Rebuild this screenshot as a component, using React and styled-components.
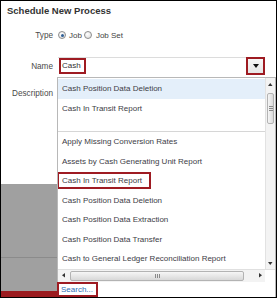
import React from "react";
import styled, { createGlobalStyle } from "styled-components";

const GlobalStyle = createGlobalStyle`
  html, body { margin: 0; padding: 0; background: #fff; }
  body { font-family: "Liberation Sans", Arial, sans-serif; }
`;

const Frame = styled.div`
  position: relative;
  width: 277px;
  height: 298px;
  box-sizing: border-box;
  border: 1px solid #000;
  display: flex;
  flex-direction: column;
  overflow: hidden;
  background: #fff;
`;

const Title = styled.h2`
  margin: 0;
  height: 20px;
  line-height: 20px;
  padding-left: 6px;
  font-size: 9.5px;
  font-weight: bold;
  color: #333;
`;

const Row = styled.div`
  display: grid;
  grid-template-columns: 52px 1fr;
  column-gap: 5px;
  align-items: center;
  height: ${(p) => p.h}px;
  margin-top: ${(p) => p.top}px;
`;

const Label = styled.label`
  text-align: right;
  font-size: 8.2px;
  color: #4a4a4a;
`;

const RadioGroup = styled.div`
  display: flex;
  align-items: center;
  gap: 2px;
  font-size: 8px;
  color: #444;
`;

const RadioOption = styled.span`
  display: flex;
  align-items: center;
  gap: 3px;
  margin-right: ${(p) => p.mr || 0}px;
`;

const Radio = styled.span`
  width: 8px;
  height: 8px;
  box-sizing: border-box;
  border-radius: 50%;
  border: 1px solid #8d8d8d;
  background: radial-gradient(circle at 40% 35%, #fff 0%, #e2e2e2 80%);
  display: flex;
  align-items: center;
  justify-content: center;
  &::after {
    content: "";
    width: 3px;
    height: 3px;
    border-radius: 50%;
    background: ${(p) => (p.checked ? "#2f5f96" : "transparent")};
  }
`;

const Combo = styled.div`
  width: 207px;
  height: 19px;
  box-sizing: border-box;
  border-top: 1px solid #dcdcdc;
  display: flex;
  align-items: flex-start;
  justify-content: space-between;
  align-self: start;
`;

const CashBox = styled.span`
  margin: 0 0 0 1px;
  border: 2px solid #9e1b22;
  padding: 0 3px 0 1px;
  height: 12px;
  line-height: 12px;
  font-size: 8px;
  color: #333;
`;

const DropButton = styled.span`
  width: 19px;
  height: 18px;
  margin-top: -1px;
  box-sizing: border-box;
  border: 2px solid #9e1b22;
  background: linear-gradient(#f7f7f7, #e6e6e6);
  display: flex;
  align-items: center;
  justify-content: center;
`;

const Fill = styled.div`
  flex: 1;
`;

const Backdrop = styled.div`
  height: 107px;
  background: #a0a0a0;
  padding-top: 73px;
  box-sizing: border-box;
`;

const BackdropLine = styled.div`
  height: 1px;
  background: #8b8b8b;
`;

const RedBar = styled.div`
  height: 6px;
  background: #9b1b1f;
`;

const Popup = styled.div`
  position: absolute;
  left: 56px;
  top: 76px;
  right: 0;
  bottom: 0;
  border: 1px solid #b8b8b8;
  border-bottom: none;
  background: #fff;
  display: flex;
  flex-direction: column;
`;

const ListArea = styled.div`
  flex: 1;
  display: flex;
  min-height: 0;
`;

const List = styled.div`
  flex: 1;
  overflow: hidden;
  padding-top: 1px;
`;

const Item = styled.div`
  height: 19.5px;
  line-height: 19.5px;
  padding-left: 4px;
  font-size: 8px;
  color: #3d3d46;
  white-space: nowrap;
  background: ${(p) => (p.active ? "#e4effa" : "transparent")};
`;

const GroupGap = styled.div`
  height: 13px;
  border-bottom: 1px solid #d6d6d6;
`;

const Marked = styled.span`
  display: inline-block;
  margin-left: -5px;
  padding: 0 7px 0 3px;
  height: 13px;
  line-height: 13px;
  border: 2px solid #9e1b22;
  vertical-align: middle;
`;

const VScroll = styled.div`
  width: 9px;
  display: flex;
  flex-direction: column;
  align-items: center;
  background: #f3f3f3;
  border-left: 1px solid #e2e2e2;
`;

const ArrowCell = styled.div`
  width: ${(p) => p.w || 9}px;
  height: ${(p) => p.h || 11}px;
  display: flex;
  align-items: center;
  justify-content: center;
  flex-shrink: 0;
`;

const VTrack = styled.div`
  flex: 1;
  width: 100%;
  padding-top: 3px;
  box-sizing: border-box;
`;

const VThumb = styled.div`
  height: 31px;
  margin: 0 1px;
  box-sizing: border-box;
  border: 1px solid #b3b3b3;
  border-radius: 2px;
  background: linear-gradient(90deg, #f6f6f6, #dadada);
  display: flex;
  align-items: center;
  justify-content: center;
  &::after {
    content: "";
    width: 4px;
    height: 5px;
    background: repeating-linear-gradient(#8a8a8a 0 1px, transparent 1px 2px);
  }
`;

const HScroll = styled.div`
  height: 12px;
  display: flex;
  align-items: stretch;
  border-top: 1px solid #e0e0e0;
  background: #f3f3f3;
`;

const HTrack = styled.div`
  flex: 1;
  padding: 1px 11px 1px 2px;
  display: flex;
`;

const HThumb = styled.div`
  flex: 1;
  box-sizing: border-box;
  border: 1px solid #b3b3b3;
  border-radius: 2px;
  background: linear-gradient(#f6f6f6, #d8d8d8);
  display: flex;
  align-items: center;
  justify-content: center;
  &::after {
    content: "";
    width: 5px;
    height: 4px;
    background: repeating-linear-gradient(90deg, #8a8a8a 0 1px, transparent 1px 2px);
  }
`;

const Corner = styled.div`
  width: 10px;
  background: #fff;
`;

const SearchRow = styled.div`
  height: 15px;
  display: flex;
  align-items: stretch;
`;

const SearchLink = styled.a`
  margin-left: -1px;
  padding: 0 3px 0 2px;
  border: 2px solid #9e1b22;
  font-size: 8px;
  line-height: 11px;
  color: #2f6db5;
  text-decoration: none;
`;

function Tri({ dir = "down", size = 4, color = "#222" }) {
  const pts = {
    down: "0,0 6,0 3,4",
    up: "0,4 6,4 3,0",
    left: "4,0 4,6 0,3",
    right: "0,0 0,6 4,3",
  }[dir];
  const vertical = dir === "up" || dir === "down";
  return (
    <svg
      width={vertical ? size * 1.5 : size}
      height={vertical ? size : size * 1.5}
      viewBox={vertical ? "0 0 6 4" : "0 0 4 6"}
    >
      <polygon points={pts} fill={color} />
    </svg>
  );
}

const group1 = ["Cash Position Data Deletion", "Cash In Transit Report"];
const group2 = [
  "Apply Missing Conversion Rates",
  "Assets by Cash Generating Unit Report",
  "Cash In Transit Report",
  "Cash Position Data Deletion",
  "Cash Position Data Extraction",
  "Cash Position Data Transfer",
  "Cash to General Ledger Reconciliation Report",
];

export default function App() {
  return (
    <>
      <GlobalStyle />
      <Frame>
        <Title>Schedule New Process</Title>
        <Row h={20} top={4}>
          <Label>Type</Label>
          <RadioGroup>
            <RadioOption>
              <Radio checked />
              Job
            </RadioOption>
            <RadioOption>
              <Radio />
              <span style={{ marginLeft: 1 }}>Job Set</span>
            </RadioOption>
          </RadioGroup>
        </Row>
        <Row h={19} top={12}>
          <Label>Name</Label>
          <Combo>
            <CashBox>Cash</CashBox>
            <DropButton>
              <Tri dir="down" size={4} color="#111" />
            </DropButton>
          </Combo>
        </Row>
        <Row h={20} top={7}>
          <Label>Description</Label>
        </Row>
        <Fill />
        <Backdrop>
          <BackdropLine />
        </Backdrop>
        <RedBar />

        <Popup>
          <ListArea>
            <List>
              {group1.map((t, i) => (
                <Item key={t} active={i === 0}>
                  {t}
                </Item>
              ))}
              <GroupGap />
              {group2.map((t, i) => (
                <Item key={t + i}>{i === 2 ? <Marked>{t}</Marked> : t}</Item>
              ))}
            </List>
            <VScroll>
              <ArrowCell h={12}>
                <Tri dir="up" size={3} color="#333" />
              </ArrowCell>
              <VTrack>
                <VThumb />
              </VTrack>
              <ArrowCell h={12}>
                <Tri dir="down" size={3} color="#333" />
              </ArrowCell>
            </VScroll>
          </ListArea>
          <HScroll>
            <ArrowCell w={10} h={11}>
              <Tri dir="left" size={3} color="#333" />
            </ArrowCell>
            <HTrack>
              <HThumb />
            </HTrack>
            <ArrowCell w={10} h={11}>
              <Tri dir="right" size={3} color="#333" />
            </ArrowCell>
            <Corner />
          </HScroll>
          <SearchRow>
            <SearchLink href="#">Search...</SearchLink>
          </SearchRow>
        </Popup>
      </Frame>
    </>
  );
}
